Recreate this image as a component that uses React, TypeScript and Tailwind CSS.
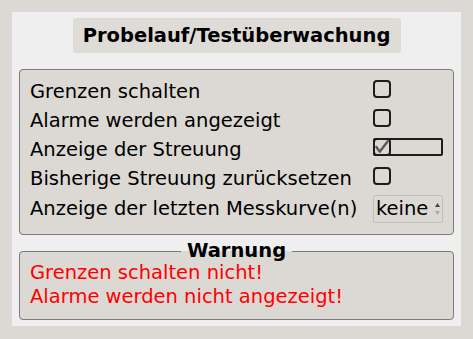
import React from "react";

const rows = [
    { label: "Grenzen schalten", kind: "box" },
    { label: "Alarme werden angezeigt", kind: "box" },
    { label: "Anzeige der Streuung", kind: "checked" },
    { label: "Bisherige Streuung zurücksetzen", kind: "box" },
];

function Box() {
    return <div className="self-start mt-[2.5px] w-[18px] h-[18px] border-2 border-[#1c1c1c] rounded-[4px]" />;
}

function CheckedBox() {
    return (
        <div className="self-start mt-[2.5px] w-[70px] h-[18px] border-2 border-[#1c1c1c] rounded-[2px] flex">
            <div className="-m-[2px] w-[18px] h-[18px] border-2 border-[#1c1c1c] rounded-[4px] flex items-center justify-center">
                <svg width="15" height="14" viewBox="0 0 15 14">
                    <path d="M1.5 7 L5 12 L13.5 1" fill="none" stroke="#5a5a5a" strokeWidth="2.6" strokeLinecap="round" strokeLinejoin="round" />
                </svg>
            </div>
        </div>
    );
}

export default function App() {
    return (
        <div className="w-[473px] h-[339px] bg-[#dcd9d5] p-[12px] text-black" style={{ fontFamily: '"DejaVu Sans", sans-serif' }}>
            <div className="w-[449px] h-[314px] bg-[#efefef] flex flex-col px-[7px] pt-[6px]">
                <div className="self-center w-[328px] h-[35px] bg-[#dfdbd7] rounded-[3px] flex items-center justify-center text-[19.5px] font-bold leading-none">
                    Probelauf/Testüberwachung
                </div>

                <div className="mt-[16px] h-[166px] border border-[#7b7b7b] rounded-[4px] bg-[#dcd9d5] pl-[10px] pt-[7px]">
                    {rows.map(r => (
                        <div key={r.label} className="h-[29px] grid grid-cols-[343px_1fr] items-center text-[19.5px] leading-none">
                            <span>{r.label}</span>
                            {r.kind === "checked" ? <CheckedBox /> : <Box />}
                        </div>
                    ))}
                    <div className="h-[32px] grid grid-cols-[343px_1fr] items-center text-[19.5px] leading-none">
                        <span>Anzeige der letzten Messkurve(n)</span>
                        <div className="w-[70px] h-[28px] border border-[#c2bfbb] rounded-[2px] bg-[#dcd9d5] flex items-center">
                            <span className="pl-[2px] flex-1 text-[19.5px]">keine</span>
                            <div className="w-[9px] h-full flex flex-col items-center justify-center gap-[4px] pr-[1px]">
                                <svg width="5" height="4" viewBox="0 0 5 4"><path d="M0 4 L2.5 0 L5 4 Z" fill="#444" /></svg>
                                <svg width="5" height="4" viewBox="0 0 5 4"><path d="M0 0 L2.5 4 L5 0 Z" fill="#aaa" /></svg>
                            </div>
                        </div>
                    </div>
                </div>

                <fieldset className="mt-[6px] h-[79px] border border-[#7b7b7b] rounded-[4px] bg-[#dcd9d5] px-[10px] pb-[4px]">
                    <legend className="mx-auto px-[6px] text-[19.5px] font-bold leading-[20px]">Warnung</legend>
                    <div className="text-[19.5px] leading-[24px] text-[#ff0000]">
                        <div>Grenzen schalten nicht!</div>
                        <div>Alarme werden nicht angezeigt!</div>
                    </div>
                </fieldset>
            </div>
        </div>
    );
}
